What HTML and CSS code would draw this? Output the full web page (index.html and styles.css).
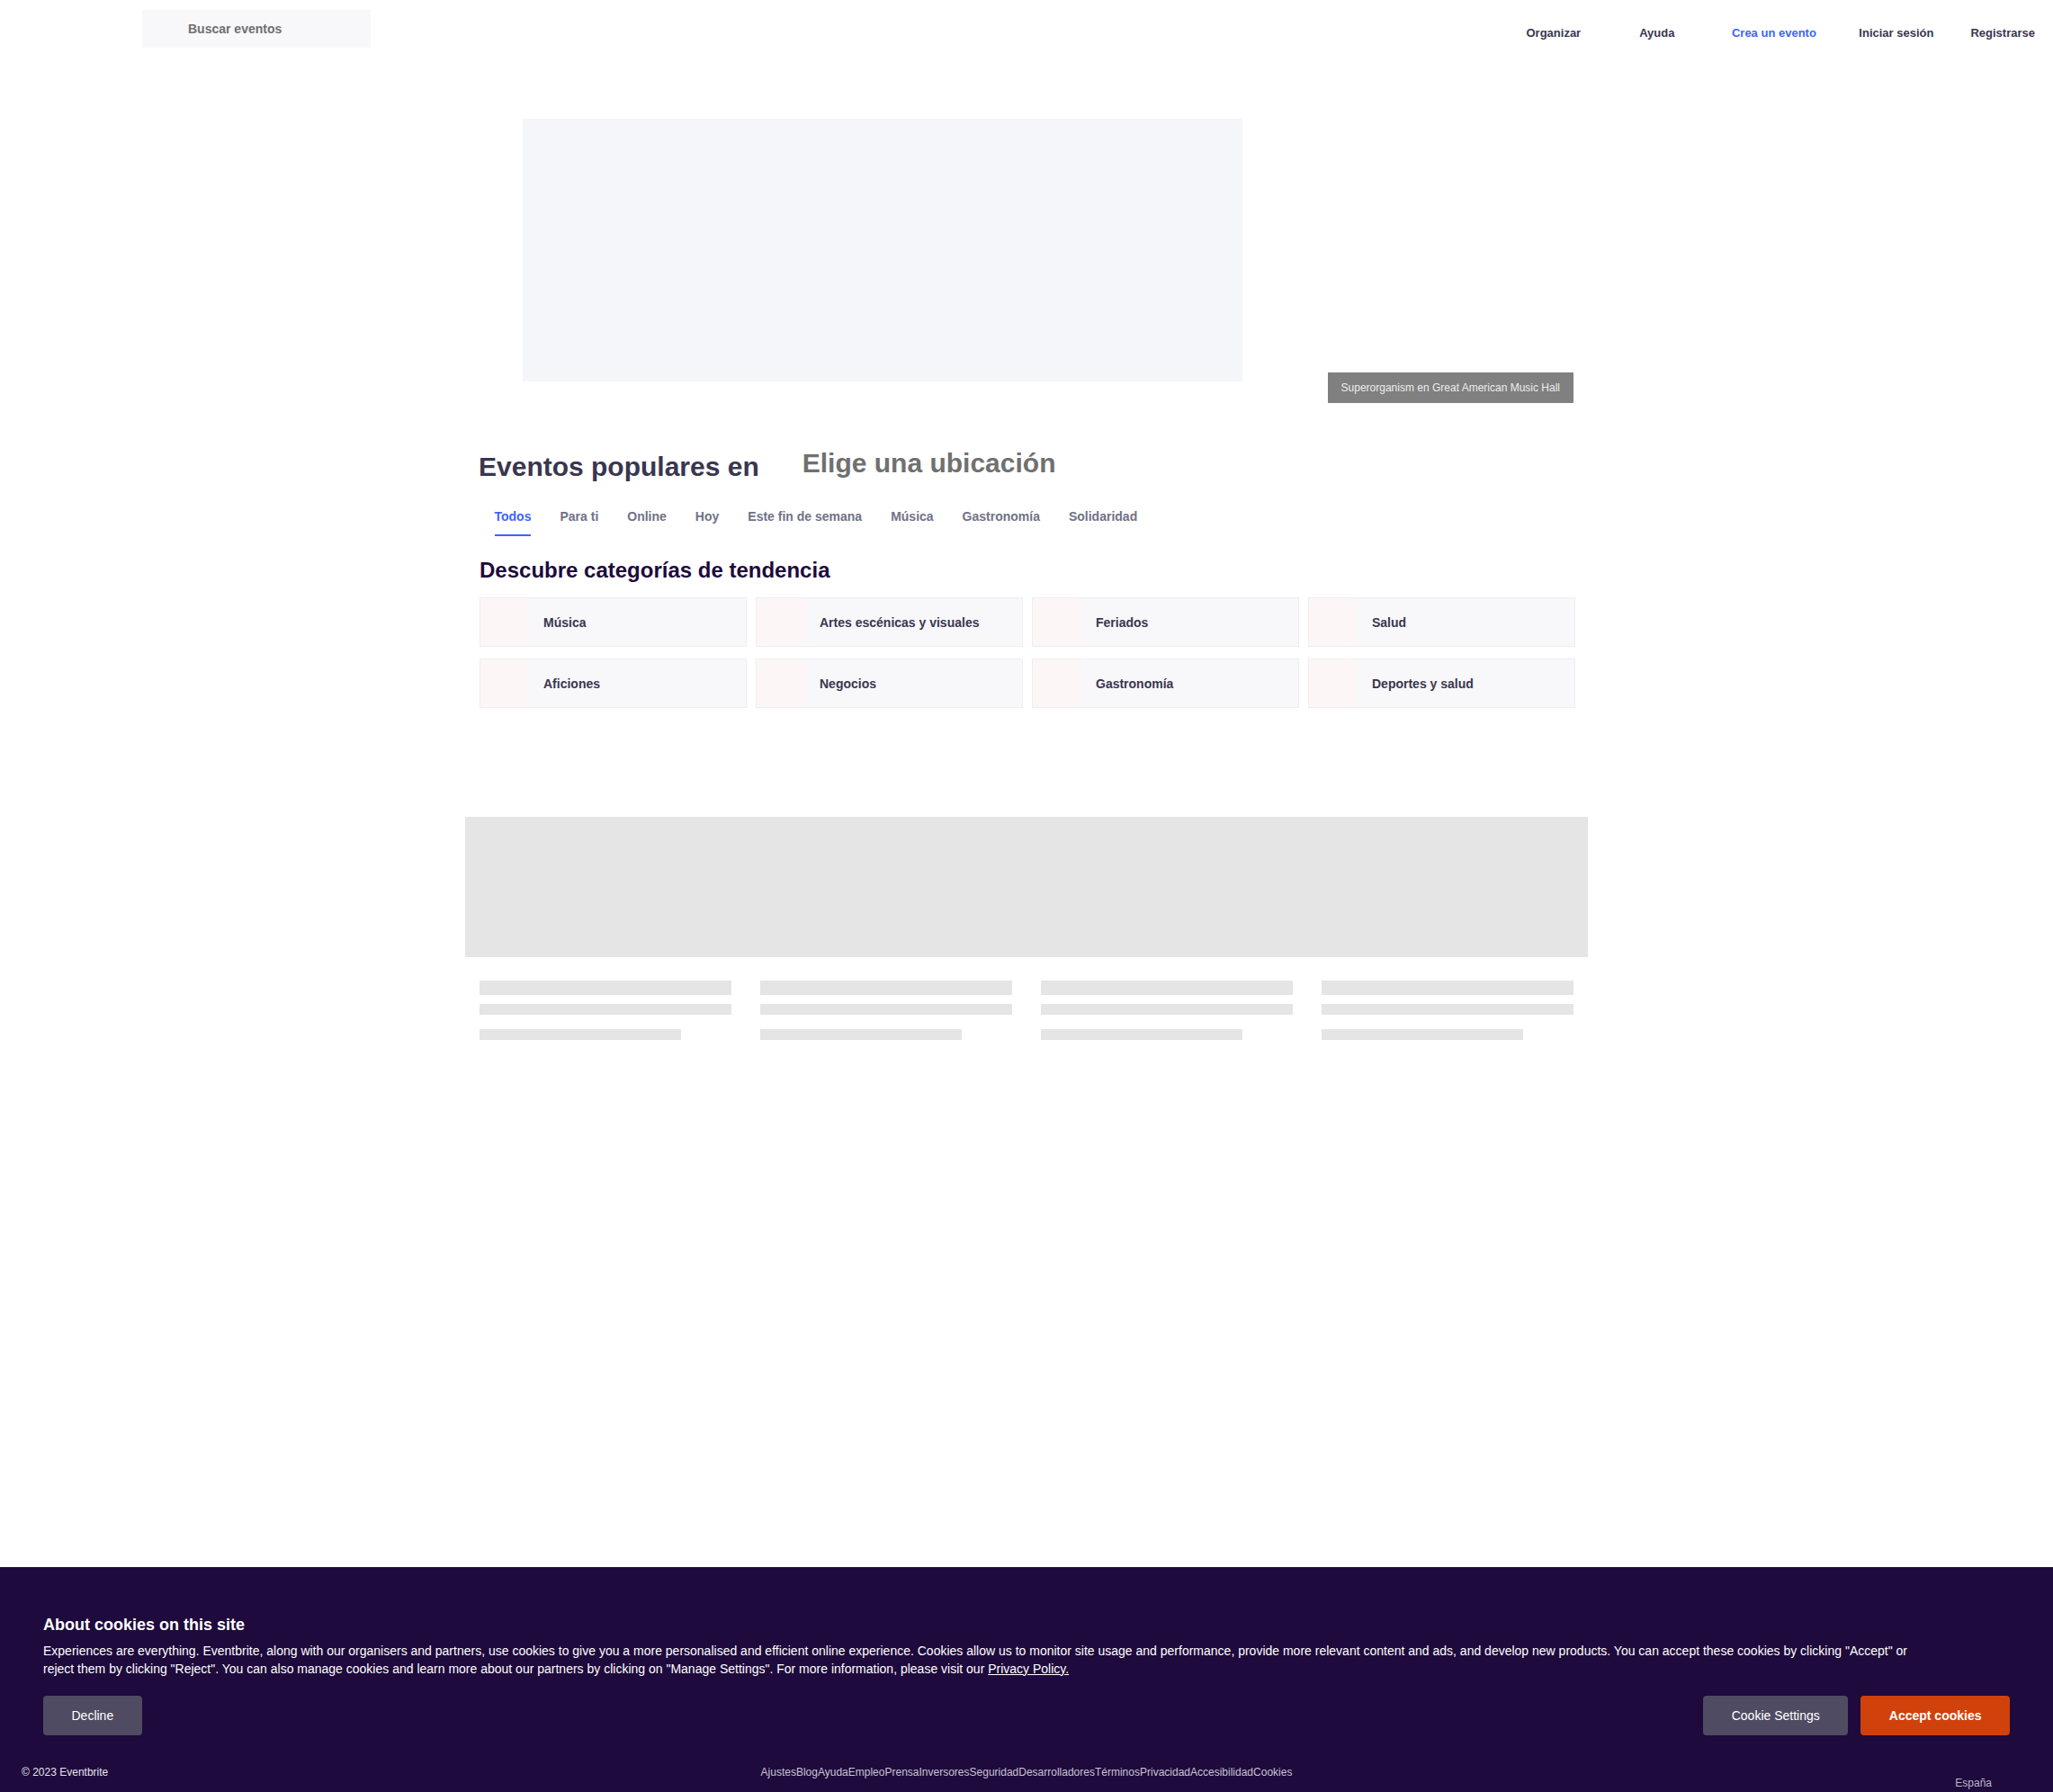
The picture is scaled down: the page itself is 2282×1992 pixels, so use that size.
FILE: index.html
```html
<!DOCTYPE html>
<html lang="es">
<head>
<meta charset="utf-8">
<title>Eventbrite</title>
<link rel="stylesheet" href="styles.css">
</head>
<body>
<header class="topbar">
  <div class="search"><span class="search-text">Buscar eventos</span></div>
  <nav class="nav">
    <a class="nav-item">Organizar</a>
    <a class="nav-item nav-ayuda">Ayuda</a>
    <a class="nav-item nav-crea">Crea un evento</a>
    <a class="nav-item nav-login">Iniciar sesión</a>
    <a class="nav-item nav-signup">Registrarse</a>
  </nav>
</header>

<main class="main">
  <section class="hero">
    <div class="hero-image"></div>
    <div class="hero-caption">Superorganism en Great American Music Hall</div>
  </section>

  <section class="popular">
    <div class="popular-head">
      <h2 class="popular-title">Eventos populares en</h2>
      <span class="popular-location">Elige una ubicación</span>
    </div>
    <ul class="tabs">
      <li class="tab"><span class="tab-label active">Todos</span></li>
      <li class="tab"><span class="tab-label">Para ti</span></li>
      <li class="tab"><span class="tab-label">Online</span></li>
      <li class="tab"><span class="tab-label">Hoy</span></li>
      <li class="tab"><span class="tab-label">Este fin de semana</span></li>
      <li class="tab"><span class="tab-label">Música</span></li>
      <li class="tab"><span class="tab-label">Gastronomía</span></li>
      <li class="tab"><span class="tab-label">Solidaridad</span></li>
    </ul>
  </section>

  <section class="trending">
    <h3 class="trending-title">Descubre categorías de tendencia</h3>
    <div class="cat-grid">
      <div class="cat"><span class="cat-icon"></span><span class="cat-name">Música</span></div>
      <div class="cat"><span class="cat-icon"></span><span class="cat-name">Artes escénicas y visuales</span></div>
      <div class="cat"><span class="cat-icon"></span><span class="cat-name">Feriados</span></div>
      <div class="cat"><span class="cat-icon"></span><span class="cat-name">Salud</span></div>
      <div class="cat"><span class="cat-icon"></span><span class="cat-name">Aficiones</span></div>
      <div class="cat"><span class="cat-icon"></span><span class="cat-name">Negocios</span></div>
      <div class="cat"><span class="cat-icon"></span><span class="cat-name">Gastronomía</span></div>
      <div class="cat"><span class="cat-icon"></span><span class="cat-name">Deportes y salud</span></div>
    </div>
  </section>

  <section class="loading">
    <div class="loading-banner"></div>
    <div class="skeleton-grid">
      <div class="skeleton"><span class="sk sk-title"></span><span class="sk sk-line"></span><span class="sk sk-short"></span></div>
      <div class="skeleton"><span class="sk sk-title"></span><span class="sk sk-line"></span><span class="sk sk-short"></span></div>
      <div class="skeleton"><span class="sk sk-title"></span><span class="sk sk-line"></span><span class="sk sk-short"></span></div>
      <div class="skeleton"><span class="sk sk-title"></span><span class="sk sk-line"></span><span class="sk sk-short"></span></div>
    </div>
  </section>
</main>

<section class="cookie">
  <div class="cookie-body">
    <h4 class="cookie-title">About cookies on this site</h4>
    <p class="cookie-text">Experiences are everything. Eventbrite, along with our organisers and partners, use cookies to give you a more personalised and efficient online experience. Cookies allow us to monitor site usage and performance, provide more relevant content and ads, and develop new products. You can accept these cookies by clicking "Accept" or reject them by clicking "Reject". You can also manage cookies and learn more about our partners by clicking on "Manage Settings". For more information, please visit our <a class="cookie-link">Privacy Policy.</a></p>
    <div class="cookie-actions">
      <button class="btn btn-muted">Decline</button>
      <div class="cookie-right">
        <button class="btn btn-muted">Cookie Settings</button>
        <button class="btn btn-accept">Accept cookies</button>
      </div>
    </div>
  </div>
  <footer class="footer">
    <span class="copyright">© 2023 Eventbrite</span>
    <nav class="footer-links">
      <a>Ajustes</a><a>Blog</a><a>Ayuda</a><a>Empleo</a><a>Prensa</a><a>Inversores</a><a>Seguridad</a><a>Desarrolladores</a><a>Términos</a><a>Privacidad</a><a>Accesibilidad</a><a>Cookies</a>
    </nav>
    <span class="country">España</span>
  </footer>
</section>
</body>
</html>
```

FILE: styles.css
```css
* { box-sizing: border-box; }

html, body { margin: 0; padding: 0; }

body {
  font-family: "Liberation Sans", Arial, sans-serif;
  color: #39364f;
  background: #ffffff;
  min-height: 100vh;
  display: flex;
  flex-direction: column;
}

a { text-decoration: none; color: inherit; }

/* Header */
.topbar {
  display: flex;
  align-items: flex-start;
  height: 72px;
  padding-left: 158px;
  padding-right: 20px;
}

.search {
  margin-top: 11px;
  width: 254px;
  height: 42px;
  background: #f8f7fa;
  display: flex;
  align-items: center;
  padding-left: 51px;
}

.search-text {
  font-size: 14px;
  font-weight: 700;
  color: #6f6f6f;
  line-height: 18px;
}

.nav {
  margin-left: auto;
  display: flex;
  margin-top: 28px;
}

.nav-item {
  font-size: 13px;
  font-weight: 700;
  line-height: 17px;
  color: #39364f;
  white-space: nowrap;
}

.nav-ayuda { margin-left: 65px; }
.nav-crea { margin-left: 63.5px; color: #3d64ff; }
.nav-login { margin-left: 47.5px; }
.nav-signup { margin-left: 41px; }

/* Main container */
.main {
  width: 1218px;
  margin: 0 auto;
  padding-top: 60px;
}

.hero {
  display: flex;
  align-items: flex-start;
  padding-left: 49px;
}

.hero-image {
  width: 800px;
  height: 292px;
  background: #f5f6fa;
}

.hero-caption {
  margin-left: auto;
  margin-right: 1px;
  margin-top: 282px;
  height: 34px;
  padding: 0 15px;
  background: #808080;
  color: #ededed;
  font-size: 12px;
  line-height: 34px;
  white-space: nowrap;
}

/* Popular */
.popular { margin-top: 53px; }

.popular-head {
  display: flex;
  align-items: flex-start;
}

.popular-title {
  margin: 0;
  font-size: 30px;
  line-height: 36px;
  font-weight: 700;
  color: #39364f;
}

.popular-location {
  margin-left: 48px;
  font-size: 30px;
  line-height: 28px;
  font-weight: 700;
  color: #707070;
}

.tabs {
  list-style: none;
  margin: 27px 0 0;
  padding: 0 0 0 1.5px;
  display: flex;
}

.tab {
  padding: 0 16px;
  font-size: 14px;
  font-weight: 700;
  line-height: 20px;
  color: #6f7287;
}

.tab-label {
  display: block;
  padding-bottom: 10px;
  border-bottom: 2px solid transparent;
}

.tab-label.active {
  color: #3d64ff;
  border-bottom-color: #3d64ff;
}

/* Trending */
.trending { margin-top: 22px; padding-left: 1px; }

.trending-title {
  margin: 0 0 14px;
  font-size: 24px;
  line-height: 32px;
  font-weight: 700;
  color: #1e0a3c;
}

.cat-grid {
  display: grid;
  grid-template-columns: repeat(4, 297px);
  column-gap: 10px;
  row-gap: 13px;
}

.cat {
  height: 55px;
  display: flex;
  align-items: center;
  background: #f8f7fa;
  border: 1px solid #eeedf2;
}

.cat-icon {
  align-self: stretch;
  width: 54px;
  background: #fcf7f6;
}

.cat-name {
  margin-left: 16px;
  font-size: 14px;
  font-weight: 700;
  color: #39364f;
}

/* Loading skeletons */
.loading { margin-top: 121px; }

.loading-banner {
  margin: 0 -15px;
  height: 156px;
  background: #e5e5e5;
}

.skeleton-grid {
  display: grid;
  grid-template-columns: repeat(4, 280px);
  column-gap: 32px;
  margin-top: 26px;
  padding-left: 1px;
}

.skeleton {
  display: flex;
  flex-direction: column;
}

.sk { display: block; background: #e5e5e5; }
.sk-title { height: 16px; width: 100%; }
.sk-line { height: 12px; width: 100%; margin-top: 10px; }
.sk-short { height: 12px; width: 80%; margin-top: 16px; }

/* Cookie banner */
.cookie {
  margin-top: auto;
  background: #1e0a3c;
  color: #ffffff;
  padding-top: 51.5px;
  padding-bottom: 1.5px;
}

.cookie-body { padding: 0 48px; }

.cookie-title {
  margin: 0 0 7px;
  font-size: 18px;
  line-height: 24px;
  font-weight: 700;
}

.cookie-text {
  margin: 0;
  max-width: 2090px;
  font-size: 14px;
  line-height: 20px;
}

.cookie-link { text-decoration: underline; }

.cookie-actions {
  display: flex;
  margin-top: 20px;
}

.cookie-right {
  margin-left: auto;
  display: flex;
  gap: 14px;
}

.btn {
  height: 44px;
  padding: 0 31.5px;
  border: none;
  border-radius: 4px;
  font-family: "Liberation Sans", Arial, sans-serif;
  font-size: 14px;
  color: #ffffff;
  cursor: pointer;
}

.btn-muted { background: #4f4b62; }

.btn-accept {
  background: #d1410c;
  font-weight: 700;
}

.footer {
  display: grid;
  grid-template-columns: 1fr auto 1fr;
  align-items: start;
  margin-top: 32px;
  padding: 0 24px;
  font-size: 12px;
  line-height: 18px;
}

.copyright { color: #e6e2ee; }

.footer-links {
  display: flex;
  color: #c9c4d4;
}

.country {
  justify-self: end;
  margin-top: 12px;
  margin-right: 44px;
  color: #bdb6cb;
}
```
